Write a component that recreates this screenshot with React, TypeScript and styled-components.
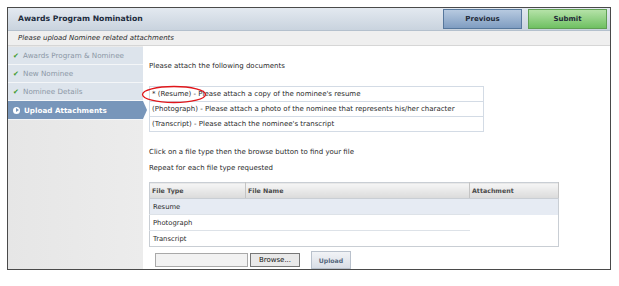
import styled, { createGlobalStyle } from "styled-components";

const Global = createGlobalStyle`
  body {
    margin: 0;
    padding: 7px;
    background: #fff;
    font-family: "DejaVu Sans", Verdana, sans-serif;
  }
`;

const steps = [
  { label: "Awards Program & Nominee", done: true },
  { label: "New Nominee", done: true },
  { label: "Nominee Details", done: true },
  { label: "Upload Attachments", done: false },
];

const docs = [
  { type: "(Resume)", text: "Please attach a copy of the nominee's resume", req: true },
  { type: "(Photograph)", text: "Please attach a photo of the nominee that represents his/her character" },
  { type: "(Transcript)", text: "Please attach the nominee's transcript" },
];

const files = ["Resume", "Photograph", "Transcript"];

export default function App() {
  return (
    <>
      <Global />
      <Frame>
        <Header>
          <h1>Awards Program Nomination</h1>
          <Buttons>
            <NavButton $tone="blue">Previous</NavButton>
            <NavButton $tone="green">Submit</NavButton>
          </Buttons>
        </Header>
        <SubHeader>Please upload Nominee related attachments</SubHeader>
        <Body>
          <Sidebar>
            {steps.map(s => (
              <Step key={s.label} $active={!s.done}>
                {s.done ? <Check>✔</Check> : <Bullet />}
                <span>{s.label}</span>
              </Step>
            ))}
          </Sidebar>
          <Content>
            <Lead>Please attach the following documents</Lead>
            <DocList>
              {docs.map(d => (
                <DocRow key={d.type}>
                  {d.req ? "* " : ""}{d.type} - {d.text}
                </DocRow>
              ))}
              <Circle viewBox="0 0 66 19">
                <ellipse cx="33" cy="9.5" rx="31.5" ry="8" fill="none" stroke="#e0161a" strokeWidth="1.3" />
              </Circle>
            </DocList>
            <Hint $first>Click on a file type then the browse button to find your file</Hint>
            <Hint>Repeat for each file type requested</Hint>
            <FileTable>
              <colgroup>
                <col style={{ width: 96 }} />
                <col style={{ width: 224 }} />
                <col />
              </colgroup>
              <thead>
                <tr>
                  <th>File Type</th>
                  <th>File Name</th>
                  <th>Attachment</th>
                </tr>
              </thead>
              <tbody>
                {files.map((f, i) => (
                  <FileRow key={f} $selected={i === 0} $last={i === files.length - 1}>
                    <td>{f}</td>
                    <td></td>
                    <td></td>
                  </FileRow>
                ))}
              </tbody>
            </FileTable>
            <UploadBar>
              <FileInput />
              <BrowseButton>Browse...</BrowseButton>
              <UploadButton>Upload</UploadButton>
            </UploadBar>
          </Content>
        </Body>
      </Frame>
    </>
  );
}

const Frame = styled.div`
  width: 602px;
  height: 261px;
  border: 1px solid #4a4a4a;
  display: flex;
  flex-direction: column;
  overflow: hidden;
`;

const Header = styled.div`
  height: 24px;
  display: flex;
  align-items: center;
  justify-content: space-between;
  padding: 0 3px 0 10px;
  background: linear-gradient(#e3e9f0, #c9d3de);
  border-bottom: 1px solid #b4c0cd;
  box-sizing: border-box;

  h1 {
    margin: 0;
    font-size: 7.7px;
    font-weight: bold;
    color: #1d2b3d;
  }
`;

const Buttons = styled.div`
  display: flex;
  gap: 6px;
`;

const NavButton = styled.div<{ $tone: "blue" | "green" }>`
  width: 79px;
  height: 20px;
  display: flex;
  align-items: center;
  justify-content: center;
  font-size: 7px;
  font-weight: bold;
  color: #1f2a38;
  box-sizing: border-box;
  border: 1px solid ${p => (p.$tone === "blue" ? "#56779c" : "#5f9f53")};
  background: ${p =>
    p.$tone === "blue"
      ? "linear-gradient(#b7cae0, #7f9dc1)"
      : "linear-gradient(#b5e2a8, #6fc062)"};
`;

const SubHeader = styled.div`
  height: 16px;
  display: flex;
  align-items: center;
  padding-left: 10px;
  background: #efefef;
  border-bottom: 1px solid #d6d6d6;
  font-size: 7px;
  font-style: italic;
  color: #2a2a2a;
  box-sizing: border-box;
`;

const Body = styled.div`
  flex: 1;
  display: flex;
`;

const Sidebar = styled.div`
  width: 135px;
  background: linear-gradient(90deg, #e6e6e6, #ececec);
  padding-top: 1px;
`;

const Step = styled.div<{ $active: boolean }>`
  position: relative;
  display: flex;
  align-items: center;
  gap: 4px;
  padding-left: 5px;
  border-bottom: 1px solid #f4f6f8;
  background: ${p => (p.$active ? "#7896ba" : "#dde4ec")};
  color: ${p => (p.$active ? "#fff" : "#8b97a5")};
  font-size: ${p => (p.$active ? "7.2px" : "7.2px")};
  font-weight: ${p => (p.$active ? "bold" : "normal")};
  height: ${p => (p.$active ? "18px" : "17px")};

  ${p =>
    p.$active &&
    `
    &::after {
      content: "";
      position: absolute;
      right: -4px;
      top: 0;
      border-top: 9px solid transparent;
      border-bottom: 9px solid transparent;
      border-left: 4px solid #7896ba;
    }
  `}
`;

const Check = styled.span`
  color: #3f9b2c;
  font-size: 7px;
  width: 6px;
`;

const Bullet = styled.span`
  width: 7px;
  height: 7px;
  border-radius: 50%;
  background: #fff;
  position: relative;

  &::after {
    content: "";
    position: absolute;
    left: 2.5px;
    top: 1.5px;
    border-top: 2px solid transparent;
    border-bottom: 2px solid transparent;
    border-left: 3px solid #7896ba;
  }
`;

const Content = styled.div`
  flex: 1;
  padding: 0 0 0 6px;
  font-size: 7px;
  color: #2a2a2a;
`;

const Lead = styled.p`
  margin: 16px 0 0;
  height: 24px;
`;

const DocList = styled.div`
  position: relative;
  width: 333px;
  border: 1px solid #d3dbe5;
`;

const DocRow = styled.div`
  height: 14px;
  display: flex;
  align-items: center;
  padding-left: 2px;
  border-bottom: 1px solid #d3dbe5;
  white-space: pre;

  &:nth-child(3) {
    border-bottom: none;
  }
`;

const Circle = styled.svg`
  position: absolute;
  left: -9px;
  top: -2px;
  width: 66px;
  height: 19px;
`;

const Hint = styled.p<{ $first?: boolean }>`
  margin: ${p => (p.$first ? "12px" : "0")} 0 0;
  height: 16px;
  line-height: 16px;
`;

const FileTable = styled.table`
  margin-top: 6px;
  width: 410px;
  table-layout: fixed;
  border-collapse: collapse;
  border: 1px solid #c9ced4;

  th {
    height: 15px;
    padding: 0 2px;
    text-align: left;
    font-size: 6.3px;
    font-weight: bold;
    color: #4a4a4a;
    background: linear-gradient(#f6f6f6, #dadada);
    border-right: 1px solid #c4c4c4;
    border-bottom: 1px solid #c9ced4;
  }

  td {
    height: 15px;
    padding: 0 3px;
    font-size: 6.8px;
  }
`;

const FileRow = styled.tr<{ $selected: boolean; $last: boolean }>`
  background: ${p => (p.$selected ? "#e6ebf3" : "#fff")};

  td:not(:last-child) {
    border-bottom: ${p => (p.$last ? "none" : "1px solid #dde2e8")};
  }
`;

const UploadBar = styled.div`
  display: flex;
  align-items: center;
  margin: 4px 0 0 6px;
`;

const FileInput = styled.div`
  width: 91px;
  height: 12px;
  border: 1px solid #a9a9a9;
  background: #f2f2f2;
`;

const BrowseButton = styled.div`
  margin-left: 2px;
  width: 48px;
  height: 12px;
  border: 1px solid #777;
  background: #e9e9e9;
  font-size: 7px;
  color: #111;
  display: flex;
  align-items: center;
  justify-content: center;
`;

const UploadButton = styled.div`
  margin-left: 11px;
  width: 38px;
  height: 16px;
  border: 1px solid #b9c1cc;
  background: linear-gradient(#f1f3f6, #d9dee6);
  font-size: 6.2px;
  font-weight: bold;
  color: #56677e;
  display: flex;
  align-items: center;
  justify-content: center;
`;
